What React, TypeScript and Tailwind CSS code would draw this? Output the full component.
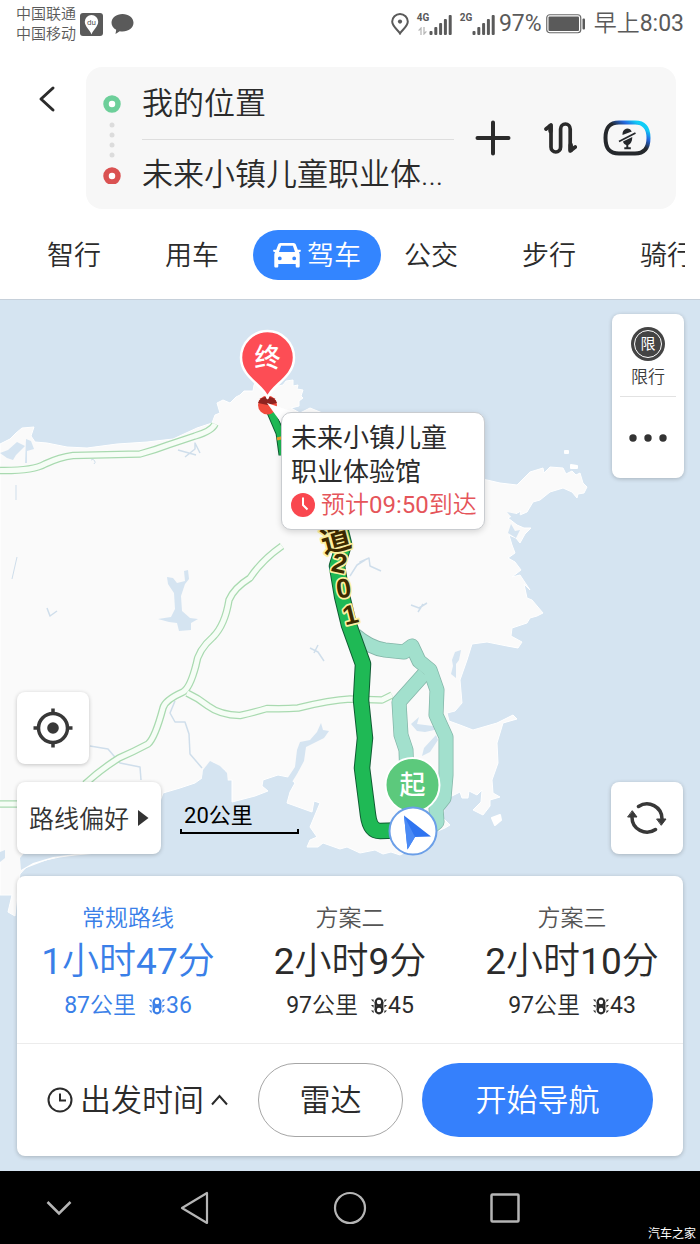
import { useState } from 'react'

const tabs = ['智行', '用车', '驾车', '公交', '步行', '骑行']

const routes = [
  { name: '常规路线', hours: 1, minutes: 47, distance: 87, lights: 36 },
  { name: '方案二', hours: 2, minutes: 9, distance: 97, lights: 45 },
  { name: '方案三', hours: 2, minutes: 10, distance: 97, lights: 43 },
]

const signalBars = [4, 8, 12, 16, 20]

function Signal({ label, data }: { label: string; data?: boolean }) {
  return (
    <div className="flex items-end">
      <div className="flex h-[22px] w-3 flex-col items-center justify-between">
        <span className="text-[10px] leading-[10px] font-bold">{label}</span>
        {data && (
          <svg width="9" height="8" viewBox="0 0 9 8" fill="none" stroke="#b9b9b9" strokeWidth="1.3">
            <path d="M3 8V1L.6 3.6M6 0v7l2.4-2.6" />
          </svg>
        )}
      </div>
      <svg width="23" height="22" viewBox="0 0 23 22" fill="#5a5a5a">
        {signalBars.map((h, i) => (
          <rect key={h} x={i * 4.8 + 0.5} y={22 - h} width="3" height={h} rx="1" />
        ))}
      </svg>
    </div>
  )
}

function StatusBar() {
  return (
    <div className="flex h-12 items-center justify-between px-4 text-[#5a5a5a]">
      <div className="flex items-center gap-1">
        <div className="text-[15px] leading-5 font-[350]">
          <div>中国联通</div>
          <div>中国移动</div>
        </div>
        <svg width="23" height="23" viewBox="0 0 23 23">
          <rect width="23" height="23" rx="3" fill="#5a5a5a" />
          <path d="M11.5 21.5C10 17 4.800 13.5 4.800 8.800a6.700 6.700 0 0 1 13.4 0c0 4.700-5.200 8.200-6.700 12.700z" fill="#fff" />
          <text x="11.5" y="11.5" textAnchor="middle" fontSize="8" fill="#5a5a5a">du</text>
        </svg>
        <svg width="23" height="22" viewBox="0 0 23 22" fill="#5a5a5a" className="ml-1">
          <path d="M11.5 1C17.6 1 22.5 4.9 22.5 9.8S17.6 18.6 11.5 18.6c-1 0-1.900-.1-2.800-.3L4.500 21l.7-4.200C2.300 15.2.5 12.7.5 9.8.5 4.900 5.400 1 11.5 1z" />
        </svg>
      </div>
      <div className="flex items-center gap-1">
        <svg width="18" height="22" viewBox="0 0 18 22" fill="none" stroke="#5a5a5a" strokeWidth="2">
          <path d="M9 20.5C7 17 1.200 13.5 1.200 8.600a7.800 7.600 0 0 1 15.6 0C16.8 13.5 11 17 9 20.5z" />
          <circle cx="9" cy="8.600" r="2.100" fill="#5a5a5a" stroke="none" />
        </svg>
        <div className="ml-1 flex gap-2">
          <Signal label="4G" data />
          <Signal label="2G" />
        </div>
        <span className="text-[23px] leading-7">97%</span>
        <svg width="40" height="20" viewBox="0 0 40 20">
          <rect x=".75" y=".75" width="34" height="18" rx="3" fill="none" stroke="#6a6a6a" strokeWidth="1.200" />
          <rect x="2.500" y="2.500" width="30.5" height="14.5" rx="1" fill="#5a5a5a" />
          <rect x="36.5" y="4.500" width="2.500" height="11" rx="1" fill="#5a5a5a" />
        </svg>
        <span className="ml-1 text-[23px] leading-7">
          <span className="font-[350]">早上</span>8:03
        </span>
      </div>
    </div>
  )
}

function SearchBar() {
  return (
    <div className="mt-[19px] flex pr-6 text-[#2b2b2b]">
      <button aria-label="返回" className="flex h-16 w-[86px] shrink-0 items-center pl-[38px]">
        <svg width="18" height="28" viewBox="0 0 18 28" fill="none" stroke="currentColor" strokeWidth="3" strokeLinecap="round" strokeLinejoin="round">
          <path d="M15 3L3 14l12 11" />
        </svg>
      </button>
      <div className="flex h-[142px] min-w-0 flex-1 items-center rounded-2xl bg-[#f7f7f7] pl-4">
        <svg width="20" height="92" viewBox="0 0 20 92" fill="none" className="shrink-0">
          <circle cx="10" cy="12" r="6" fill="#fff" stroke="#6dcf9a" strokeWidth="5.500" />
          <g fill="#dcdcdc">
            <circle cx="10" cy="33" r="2.500" />
            <circle cx="10" cy="43" r="2.500" />
            <circle cx="10" cy="53" r="2.500" />
            <circle cx="10" cy="63" r="2.500" />
          </g>
          <circle cx="10" cy="84" r="6" fill="#fff" stroke="#da5252" strokeWidth="5.500" />
        </svg>
        <div className="ml-5 min-w-0 flex-1 pt-[3px] text-[31px] leading-[70px] font-[350]">
          <button className="block w-full truncate border-b border-[#dedede] text-left">我的位置</button>
          <button className="block w-full truncate text-left">未来小镇儿童职业体...</button>
        </div>
        <div className="ml-5 flex shrink-0 items-center pr-[25px]">
          <button aria-label="添加途经点">
            <svg width="38" height="38" viewBox="0 0 38 38" stroke="currentColor" strokeWidth="4" strokeLinecap="round">
              <path d="M19 3.500v31M3.500 19h31" />
            </svg>
          </button>
          <button aria-label="交换起终点" className="ml-[31px]">
            <svg width="34" height="38" viewBox="0 0 34 38" fill="none" stroke="currentColor" strokeWidth="3.700" strokeLinecap="round" strokeLinejoin="round">
              <path d="M3 10l5-4v22a4.800 5 0 0 0 9.600 0V10a4.800 5 0 0 1 9.600 0v22l5-4" />
              <path d="M7.500 7v5M27.700 26v5" strokeWidth="4.500" />
            </svg>
          </button>
          <button aria-label="语音助手" className="ml-[26px]">
            <svg width="48" height="38" viewBox="0 0 48 38" fill="none">
              <defs>
                <linearGradient id="voice" x1=".2" y1=".9" x2="1" y2=".1">
                  <stop offset=".5" stopColor="#25282c" />
                  <stop offset=".72" stopColor="#2368e0" />
                  <stop offset=".9" stopColor="#10cdf7" />
                </linearGradient>
              </defs>
              <path d="M16 3.500h16c9 0 13.5 5 13.5 15.5S41 34.5 32 34.5H16C7 34.5 2.500 30 2.500 19S7 3.500 16 3.500z" stroke="url(#voice)" strokeWidth="4" />
              <path d="M19.5 16a5 6 0 0 1 9.300-3.500zM20 22.500l9.300-4.500c0 4.500-1.600 7-4 8v2.300h2.500v2h-6.500v-2h2v-2.300c-1.800-.6-2.900-1.700-3.300-3.500z" fill="#25282c" />
              <path d="M16 22.5L32.5 14" stroke="#25282c" strokeWidth="1.800" />
            </svg>
          </button>
        </div>
      </div>
    </div>
  )
}

function CarIcon() {
  return (
    <svg width="28" height="26" viewBox="0 0 28 26" fill="#fff">
      <path
        fillRule="evenodd"
        d="M7.500 1h13c1.200 0 2 .7 2.400 1.800l1.900 5H27c.9 0 1.200 1.500.4 1.900l-1.500.6c.6.8.8 1.700.8 2.700v11c0 1-.5 1.500-1.500 1.500h-1c-1 0-1.500-.5-1.500-1.500v-2H5.300v2c0 1-.5 1.500-1.500 1.500h-1c-1 0-1.500-.5-1.500-1.500V13c0-1 .2-1.900.8-2.700L.6 9.700C-.2 9.300.1 7.800 1 7.800h2.200l1.900-5C5.500 1.700 6.300 1 7.500 1zm.6 2.700L6 10h16l-2.100-6.300zM6.800 14.5a1.900 1.900 0 1 0 0 3.800 1.900 1.900 0 0 0 0-3.800zm14.4 0a1.900 1.900 0 1 0 0 3.800 1.900 1.900 0 0 0 0-3.800z"
      />
    </svg>
  )
}

function Tabs() {
  const [active, setActive] = useState('驾车')
  return (
    <nav className="mt-[21px] mr-[15px] flex gap-16 overflow-hidden pb-[19px] pl-[47px] text-[27px] font-[350] whitespace-nowrap text-[#2b2b2b]">
      {tabs.map((tab) =>
        tab === active ? (
          <button
            key={tab}
            className="-mr-[41px] -ml-[30px] flex h-[50px] shrink-0 items-center gap-[6px] rounded-full bg-[#3385ff] px-5 text-white"
          >
            <CarIcon />
            <span className="pt-[3px]">{tab}</span>
          </button>
        ) : (
          <button key={tab} onClick={() => setActive(tab)} className="h-[50px] shrink-0 pt-[3px]">
            {tab}
          </button>
        ),
      )}
    </nav>
  )
}

const land =
  'M0 444L10 439 16 433 22 428 34 427 31 436 35 442 47 443 67 447 87 448 117 444 147 442 173 439 197 428 212 423 215 415 220 413 217 403 223 400 230 403 236 397 240 395 244 391 253 391 254 385 256 382 270 388 283 385 286 381 293 380 293 386 298 385 297 389 303 390 301 396 303 398 299 401 299 406 291 408 300 413 310 408 320 412 380 440 430 470 487 480 500 483 517 485 530 472 543 468 544 473 550 467 563 468 566 474 572 471 576 475 580 473 583 483 587 487 584 493 578 494 577 498 572 492 563 488 550 492 540 500 533 502 527 512 520 515 521 511 508 518 517 525 524 528 531 528 525 534 520 543 516 538 509 535 512 545 515 553 508 558 515 562 521 570 512 577 520 575 530 590 524 584 527 598 532 600 543 613 537 616 530 618 527 623 512 628 511 636 522 642 518 648 507 646 487 642 472 644 467 660 460 680 462 703 455 711 447 713 449 721 460 725 473 730 497 723 513 715 517 719 503 723 497 743 498 763 492 780 493 793 500 797 490 800 490 806 483 815 473 810 481 802 482 790 477 795 469 791 468 798 462 798 460 792 448 798 444 808 443 818 450 825 445 828 433 833 420 845 400 855 391 852 383 854 375 850 360 853 347 847 340 849 323 843 318 847 307 847 310 840 317 837 310 827 320 803 314 801 312 812 287 803 290 792 295 783 288 777 278 775 263 780 262 786 268 791 255 796 232 802 232 780 226 780 225 770 219 767 213 762 209 769 203 770 202 778 195 783 180 788 163 793 150 830 130 850 75 855 60 857 30 863 20 874 17 895 15 916 8 912 12 895 0 895z'

const expressways = [
  'M0 470.5Q33 471 45 464 60 457 73 455.5L140 454Q155 450 168 445L195 436Q212 431 215 424',
  'M187 693Q198 698 208 706 220 715 240 715.5 255 712 267 708.5 285 709 298 708 330 700 350 699L382 700 392 695',
  'M282 546Q262 560 250 578 234 588 229 600 225 625 213 637 198 650 196 665 190 688 183 692 165 700 163 708 155 738 148 744 133 752 119 758 100 770 85 784',
  'M0 804h20',
]

const alternatives = [
  'M424 674L399 702 401 735 406 750 407 780',
  'M355 635Q370 648 385 650L404 652 412 646 419 661 430 670 437 690 436 715 446 737 446 775 444 798 436 808 437 822 425 832',
]

const mainRoute =
  'M338 520L344 544 337 566 342 596 349 625 363 664 361 700 365 738 362 768 368 815Q370 831 380 831L410 830'

function MapCanvas() {
  return (
    <svg
      viewBox="0 300 700 871"
      preserveAspectRatio="xMidYMin slice"
      className="absolute inset-0 h-full w-full"
      fill="none"
      strokeLinejoin="round"
    >
      <rect y="299" width="700" height="873" fill="#d5e4f1" />
      <path d={land} fill="#fafafa" stroke="#fff" />
      <path d="M21 870l12-7 22-6M492 818l8-3 1 5-6 5zM571 465l6 1v2h-6zM565 451h3v2h-3z" stroke="#fff" strokeWidth="2" fill="#fff" />

      {/* lakes, inlets and reservoirs */}
      <g fill="#d5e4f1">
        <path d="M0 453l8-3 9-8 8 4-9 9-3 5-6-2zM26 439l5 2 3 8-7 2v12h-2zM511 524l4 7 5-1-4 8-8-5zM507 512l14 3-7 5z" />
        <path d="M167 577l6 1 4 5 8-2-1-10 4-1 1 9-4 5-4 12 1 15 8 7 8 1-7 4v7l-12 1-2-8-8-1-11-3 13-2 4-8-1-16-6-9z" />
        <path d="M297 750l3-8 10-2 7-8 4-9 2 7 6 1-5 7-10 5-8 4-2 14-7 13-5 8-5-3 8-12z" />
        <path d="M203 770l7-9 10 5 7 7 3 30-30-10z" />
        <path d="M452 660l3-8 6-2-2 10-3 4v14l-5-4 2-8zM411 724l8-7-2 7 16 2 6 3-14 3-8-1zM424 748l12-13 2 5-8 12-8 4z" />
        <path d="M20 858l5-6 20-2 30 4-22 3-20 6-12 7zM0 852l5-2v8l-5 4z" />
      </g>
      <g stroke="#cfdeeb" strokeWidth="1.500">
        <path d="M178 450l18 5M185 457l10-8v-6l5 10M47 608l3 8 7-5M310 648l8 4 6 9M314 653l4-8M411 605l8 3 8-5M418 612l5-8M350 576l7-11 8-5-5 2 9-4 1 8 11 5" />
        <path d="M175 701l-5 12 5 9h10l4 12 1 20 12 14M90 746l18 3 12 14 20 4 1 13" />
        <path d="M16 485v15M17 557l-5 22M91 460a2 2 0 1 1 3 4" strokeWidth="1" />
      </g>

      {/* expressways */}
      {expressways.map((d) => (
        <path key={d} d={d} stroke="#a9dab0" strokeWidth="7.500" />
      ))}
      {expressways.map((d) => (
        <path key={d} d={d} stroke="#f6fdf6" strokeWidth="5" />
      ))}

      {/* alternative routes */}
      {alternatives.map((d) => (
        <path key={d} d={d} stroke="#84b5a8" strokeWidth="15" />
      ))}
      {alternatives.map((d) => (
        <path key={d} d={d} stroke="#a2e0cd" strokeWidth="13.5" />
      ))}

      {/* selected route */}
      <path d="M271 412L280 433 283 455" stroke="#0f5c33" strokeWidth="9" />
      <path d="M271 412L280 433 283 455" stroke="#1fb955" strokeWidth="7" />
      <path d="M277 439l8-2" stroke="#f0a02c" strokeWidth="3" />
      <path d={mainRoute} stroke="#0f5c33" strokeWidth="16.5" />
      <path d={mainRoute} stroke="#1fb955" strokeWidth="14.5" />

      <g
        fill="#3d2a00"
        stroke="#fdf0a0"
        strokeWidth="3.500"
        paintOrder="stroke"
        fontSize="27"
        fontWeight="700"
        textAnchor="middle"
        className="font-['Liberation_Sans','Noto_Sans_CJK_SC',sans-serif]"
      >
        <text x="336" y="550" fontSize="30" transform="rotate(-15 336 540)">道</text>
        <text x="339.5" y="572.5" transform="rotate(12 339.5 563)">2</text>
        <text x="343.5" y="597.5" transform="rotate(-8 343.5 588)">0</text>
        <text x="350" y="624" transform="rotate(-14 350 614)">1</text>
      </g>

      {/* destination pin */}
      <circle cx="267.5" cy="405" r="9.500" fill="#f14a3c" />
      <path d="M258 403a10 9 0 0 1 19 0l-9.500 2z" fill="#8e2320" />
      <path d="M267 403L294 412 282 424z" fill="#fff" />
      <path d="M267.5 398C264 385 241 378 241 357.5a26.5 26.5 0 0 1 53 0C294 378 271 385 267.5 398z" fill="#fd4d55" stroke="#fff" strokeWidth="2.500" />
      <text x="267.5" y="367" fontSize="26" fontWeight="500" fill="#fff" textAnchor="middle">终</text>

      {/* start pin and current heading */}
      <circle cx="412.5" cy="785" r="27" fill="#5cc97c" stroke="#fff" strokeWidth="2" />
      <text x="412.5" y="794" fontSize="26" fontWeight="500" fill="#fff" textAnchor="middle">起</text>
      <circle cx="413" cy="831" r="23.5" fill="#fff" stroke="#6b9fe8" strokeWidth="2" />
      <path d="M404 815.5L431 836.5 415 837 407.5 849.5z" fill="#2f74f0" />
      <path d="M404 815.5L415 837 407.5 849.5z" fill="#4a8af5" />
    </svg>
  )
}

const cardClass = 'rounded-lg bg-white shadow-[0_1px_4px_rgba(0,0,0,0.22)]'

function Destination() {
  return (
    <div className="absolute top-[112px] left-[281px] rounded-[10px] border border-[#c9ccd0] bg-white py-2 pr-[7px] pl-[9px] shadow-[0_2px_6px_rgba(0,0,0,0.15)]">
      <div className="text-[26px] leading-[34px] text-[#2b2b2b]">
        未来小镇儿童
        <br />
        职业体验馆
      </div>
      <div className="flex items-center gap-[6px] text-[24px] leading-8 text-[#e5555a]">
        <svg width="24" height="24" viewBox="0 0 24 24">
          <circle cx="12" cy="12" r="12" fill="#f9474f" />
          <path d="M12 4.500V12l4.500 4.500" fill="none" stroke="#fff" strokeWidth="2" />
        </svg>
        <span>
          <span className="font-[350]">预计</span>09:50<span className="font-[350]">到达</span>
        </span>
      </div>
    </div>
  )
}

function LightIcon() {
  return (
    <svg width="16" height="20" viewBox="0 0 16 20" fill="none" stroke="currentColor">
      <circle cx="8" cy="6" r="3.300" strokeWidth="2.200" />
      <circle cx="8" cy="14" r="3.300" strokeWidth="2.200" />
      <path d="M4.700 6v8M11.3 6v8" strokeWidth="2.200" />
      <path d="M0 3.500h2.600v2.800zM0 9h2.600v2.800zM0 14.5h2.600v2.800zM16 3.500h-2.600v2.800zM16 9h-2.600v2.800zM16 14.5h-2.600v2.800z" fill="currentColor" stroke="none" />
    </svg>
  )
}

function RoutePanel() {
  const [selected, setSelected] = useState(0)
  return (
    <div className={`mt-[22px] w-full ${cardClass}`}>
      <div className="grid grid-cols-3 border-b border-[#ececec] pt-[26px] pb-[19px]">
        {routes.map((r, i) => (
          <button
            key={r.name}
            onClick={() => setSelected(i)}
            className={`flex flex-col items-center whitespace-nowrap ${selected === i ? 'text-[#3a7fe8]' : 'text-[#2b2b2b]'}`}
          >
            <span className={`text-[23px] leading-[34px] font-[350] ${selected === i ? '' : 'text-[#555]'}`}>{r.name}</span>
            <span className="text-[37px] leading-[52px]">
              {r.hours}
              <span className="font-[350]">小时</span>
              {r.minutes}
              <span className="font-[350]">分</span>
            </span>
            <span className="flex items-center text-[23px] leading-[36px]">
              {r.distance}
              <span className="font-[350]">公里</span>
              <span className="ml-[13px] flex items-center gap-px">
                <LightIcon />
                {r.lights}
              </span>
            </span>
          </button>
        ))}
      </div>
      <div className="flex items-center py-[19px] pr-[30px] pl-[30px] text-[31px] font-[350] text-[#2b2b2b]">
        <button className="flex shrink-0 items-center gap-[7px]">
          <svg width="26" height="26" viewBox="0 0 26 26" fill="none" stroke="currentColor" strokeWidth="2">
            <circle cx="13" cy="13" r="11.5" />
            <path d="M13 6.500V13.5h6" />
          </svg>
          <span className="pt-[3px]">出发时间</span>
          <svg width="17" height="12" viewBox="0 0 17 12" fill="none" stroke="currentColor" strokeWidth="2">
            <path d="M1 10.5L8.500 2l7.500 8.500" />
          </svg>
        </button>
        <button className="ml-[30px] h-[74px] w-[145px] shrink-0 rounded-full border border-[#a6a6a6] pt-[3px]">雷达</button>
        <button className="ml-[19px] h-[74px] flex-1 rounded-full bg-[#3580fc] pt-[3px] text-white">开始导航</button>
      </div>
    </div>
  )
}

function SystemNav() {
  return (
    <footer className="relative flex h-[73px] text-[#b5b5b5]">
      <button aria-label="收起" className="flex w-[117px] items-center justify-center">
        <svg width="26" height="16" viewBox="0 0 26 16" fill="none" stroke="currentColor" strokeWidth="2.500">
          <path d="M1.500 2L13 13.5 24.5 2" />
        </svg>
      </button>
      <button aria-label="返回" className="flex w-[155px] items-center justify-center">
        <svg width="30" height="34" viewBox="0 0 30 34" fill="none" stroke="currentColor" strokeWidth="2.200" strokeLinejoin="round">
          <path d="M27 2v30L2 17z" />
        </svg>
      </button>
      <button aria-label="主屏幕" className="flex w-[155px] items-center justify-center">
        <svg width="34" height="34" viewBox="0 0 34 34" fill="none" stroke="currentColor" strokeWidth="2.200">
          <circle cx="17" cy="17" r="15" />
        </svg>
      </button>
      <button aria-label="最近任务" className="flex w-[155px] items-center justify-center">
        <svg width="30" height="30" viewBox="0 0 30 30" fill="none" stroke="currentColor" strokeWidth="2.500">
          <rect x="1.500" y="1.500" width="27" height="27" rx="1" />
        </svg>
      </button>
      <span className="absolute right-1 bottom-0 text-[12px] leading-5 text-white">汽车之家</span>
    </footer>
  )
}

export default function App() {
  return (
    <div className="flex min-h-screen flex-col bg-black font-['Roboto','Noto_Sans_CJK_SC',sans-serif]">
      <header className="bg-white">
        <StatusBar />
        <SearchBar />
        <Tabs />
      </header>

      <main className="relative flex flex-1 flex-col border-t border-[#c6d0da]">
        <MapCanvas />
        <Destination />

        <div className="relative mx-4 mt-[14px] flex justify-end">
          <div className={`flex w-[72px] flex-col items-center px-2 text-[#3c3c3c] ${cardClass}`}>
            <button className="flex w-full flex-col items-center border-b border-[#e2e2e2] pt-[13px] pb-[5px]">
              <span className="flex h-[34px] w-[34px] items-center justify-center rounded-full bg-[#444]">
                <span className="flex h-7 w-7 items-center justify-center rounded-full border border-white text-[15px] leading-none text-white">
                  限
                </span>
              </span>
              <span className="pt-[2px] text-[17px] leading-7 font-[350]">限行</span>
            </button>
            <button aria-label="更多" className="flex h-[81px] items-center">
              <svg width="38" height="8" viewBox="0 0 38 8" fill="#333">
                <circle cx="4" cy="4" r="3.700" />
                <circle cx="19" cy="4" r="3.700" />
                <circle cx="34" cy="4" r="3.700" />
              </svg>
            </button>
          </div>
        </div>

        <div className="relative mx-[17px] mt-auto mb-[15px] flex flex-col items-start">
          <button aria-label="定位" className={`flex h-[72px] w-[72px] items-center justify-center ${cardClass}`}>
            <svg width="40" height="40" viewBox="0 0 40 40" fill="none" stroke="#383838">
              <circle cx="20" cy="20" r="14.5" strokeWidth="3.500" />
              <circle cx="20" cy="20" r="5.800" fill="#383838" stroke="none" />
              <path d="M20 .5v6M20 33.5v6M.5 20h6M33.5 20h6" strokeWidth="3.500" />
            </svg>
          </button>
          <div className="mt-[18px] flex w-full items-center">
            <button className={`flex h-[72px] items-center gap-2 px-3 text-[25px] font-[350] text-[#333] ${cardClass}`}>
              <span className="pt-[3px]">路线偏好</span>
              <svg width="12" height="16" viewBox="0 0 12 16" fill="#333">
                <path d="M1 0l10.5 8L1 16z" />
              </svg>
            </button>
            <div className="ml-[19px] w-[119px] text-[22px] leading-[26px] text-black">
              <div className="pl-1">20公里</div>
              <div className="h-[5px] border-x-2 border-b-2 border-black" />
            </div>
            <button aria-label="刷新" className={`ml-auto flex h-[72px] w-[72px] items-center justify-center ${cardClass}`}>
              <svg width="40" height="36" viewBox="0 0 40 36" fill="none" stroke="#383838" strokeWidth="3.500" strokeLinecap="round">
                <path d="M11.5 6.500A15 15 0 0 1 35 19" />
                <path d="M28.5 29.5A15 15 0 0 1 5 17" />
                <path d="M30 19h9l-4.500 6zM1 17h9l-4.500-6z" fill="#383838" strokeWidth="1" strokeLinejoin="round" />
              </svg>
            </button>
          </div>
          <RoutePanel />
        </div>
      </main>

      <SystemNav />
    </div>
  )
}
